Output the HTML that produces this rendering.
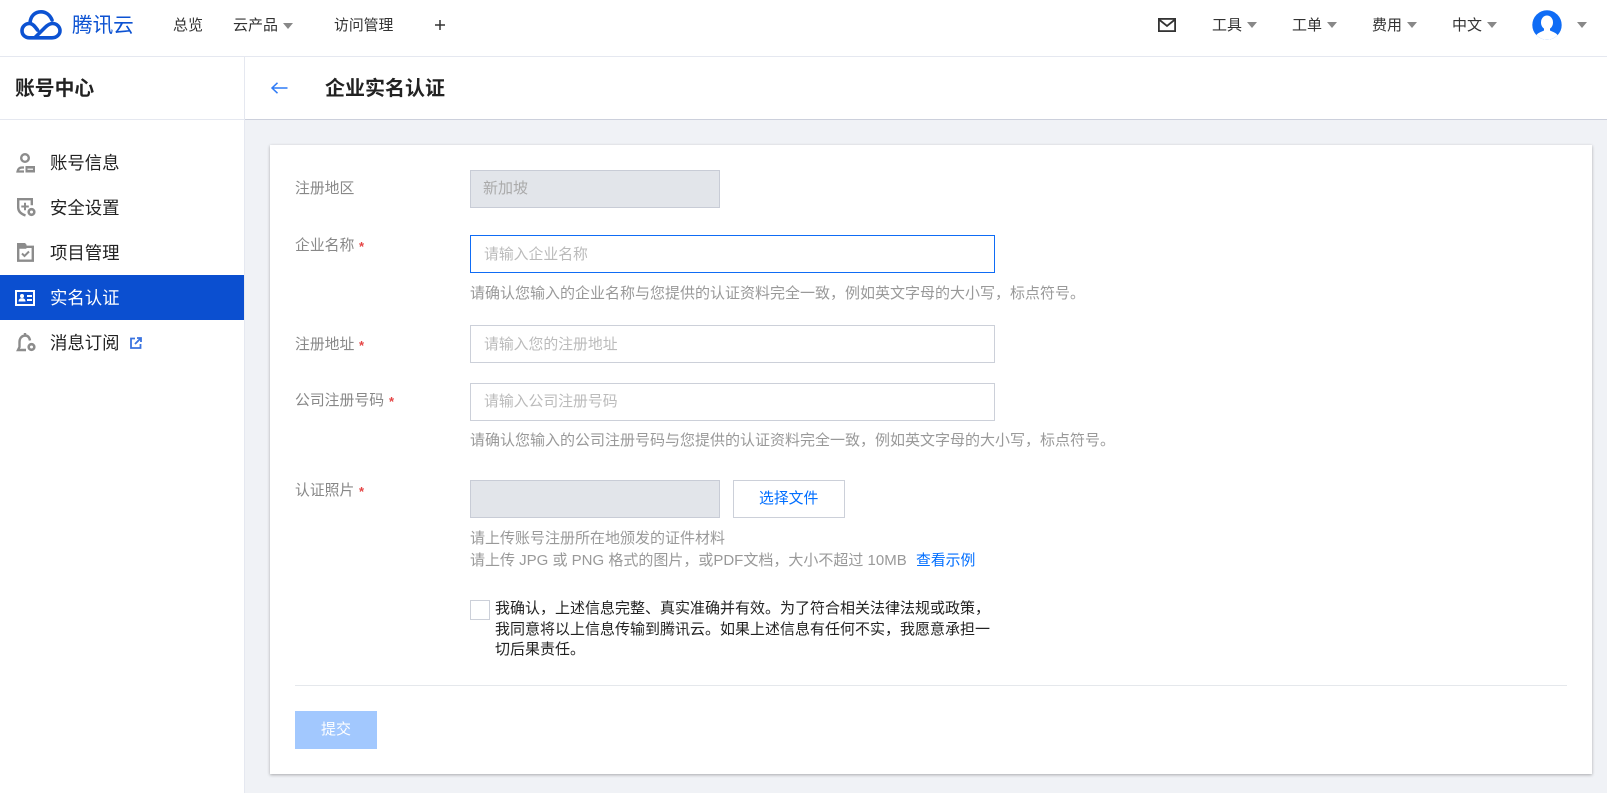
<!DOCTYPE html>
<html lang="zh-CN">
<head>
<meta charset="utf-8">
<title>企业实名认证</title>
<style>
html,body{margin:0;padding:0;}
body{position:relative;width:1607px;height:793px;overflow:hidden;background:#f0f2f6;font-family:"Liberation Sans","Noto Sans CJK SC",sans-serif;font-size:15px;color:#222;}
.b{position:absolute;box-sizing:border-box;}
.t{position:absolute;white-space:nowrap;line-height:20px;height:20px;}
.nav{color:#333;}
.label{color:#888;left:295px;font-size:14.85px;}
.help{color:#999;left:470px;}
.ph{color:#bbb;left:484px;font-size:14.85px;}
.star{position:absolute;color:#e54545;font-size:13px;line-height:12px;font-weight:700;}
.input{left:470px;width:525px;height:38px;background:#fff;border:1px solid #ccd0d9;}
.side{left:50px;font-size:17.4px;color:#222;}
.caret{position:absolute;width:0;height:0;border-left:5px solid transparent;border-right:5px solid transparent;border-top:6px solid #888;}
svg{position:absolute;overflow:visible;}
</style>
</head>
<body>
<!-- top bar -->
<div class="b" style="left:0;top:0;width:1607px;height:57px;background:#fff;border-bottom:1px solid #e5e8f0;"></div>
<svg style="left:20px;top:10px" width="42" height="30" viewBox="0 0 42 30" fill="none" stroke="#0c52d2" stroke-width="3.6" stroke-linecap="round" stroke-linejoin="round">
<path d="M10 13C10.500 6 15 1.800 21 1.800C26 1.800 30 5 32 10"/>
<path d="M17.500 20C14.500 16 12.500 13.500 9.500 13.500C5.200 13.500 2 16.800 2 20.700C2 24.800 5.300 27.800 9.500 27.800H32C36.500 27.800 40 24.500 40 20.700C40 16.500 36.500 13.500 32.500 13.500C29.500 13.500 27.500 15 25 17.500L15 27.500"/>
</svg>
<div class="t" style="left:72px;top:14px;font-size:20.600px;line-height:24px;height:24px;color:#0c52d2;">腾讯云</div>
<div class="t nav" style="left:173px;top:16px;">总览</div>
<div class="t nav" style="left:233px;top:16px;">云产品</div>
<div class="caret" style="left:283px;top:23px;"></div>
<div class="t nav" style="left:334px;top:16px;font-size:14.85px;">访问管理</div>
<svg style="left:435px;top:20px" width="10" height="10" viewBox="0 0 10 10" stroke="#333" stroke-width="1.500"><path d="M0 5H10M5 0V10"/></svg>

<svg style="left:1158px;top:18px" width="18" height="14" viewBox="0 0 18 14" fill="none" stroke="#333" stroke-width="1.800"><rect x=".9" y=".9" width="16.200" height="12.200"/><path d="M1 1.500L9 8l8-6.500"/></svg>
<div class="t nav" style="left:1212px;top:16px;">工具</div>
<div class="caret" style="left:1247px;top:22px;"></div>
<div class="t nav" style="left:1292px;top:16px;">工单</div>
<div class="caret" style="left:1327px;top:22px;"></div>
<div class="t nav" style="left:1372px;top:16px;">费用</div>
<div class="caret" style="left:1407px;top:22px;"></div>
<div class="t nav" style="left:1452px;top:16px;">中文</div>
<div class="caret" style="left:1487px;top:22px;"></div>
<svg style="left:1532px;top:10px" width="30" height="30" viewBox="0 0 30 30">
<defs><clipPath id="c"><circle cx="15" cy="15" r="14.700"/></clipPath></defs>
<circle cx="15" cy="15" r="14.700" fill="#0f6cf5"/>
<g clip-path="url(#c)" fill="#fff"><ellipse cx="15" cy="12.500" rx="6" ry="7"/><path d="M12 18v2.500c-2.500 1.500-7 2.200-8 5.500v5h22v-5c-1-3.300-5.500-4-8-5.500V18z"/></g>
</svg>
<div class="caret" style="left:1577px;top:22px;"></div>

<!-- sidebar -->
<div class="b" style="left:0;top:57px;width:245px;height:736px;background:#fff;border-right:1px solid #e5e8f0;"></div>
<div class="b" style="left:0;top:119px;width:244px;height:1px;background:#e5e8f0;"></div>
<div class="t" style="left:15px;top:79px;height:20px;font-size:19.800px;line-height:20px;font-weight:700;color:#222;">账号中心</div>

<svg style="left:16px;top:152px" width="20" height="21" viewBox="0 0 20 21" fill="none" stroke="#8c8c8c" stroke-width="2.400"><circle cx="9" cy="6" r="3.800"/><path d="M8 15.500H6C3.500 15.500 2 16.800 1.500 19.500H8" stroke-width="2.200"/><rect x="9.500" y="14" width="9.500" height="6.500" fill="#8c8c8c" stroke="none"/><path d="M11.500 17.200h5.500" stroke="#fff" stroke-width="1.200"/></svg>
<div class="t side" style="top:153px;">账号信息</div>

<svg style="left:17px;top:198px" width="19" height="19" viewBox="0 0 19 19" fill="none" stroke="#8c8c8c" stroke-width="2.400"><path d="M8.500 17.500C3.500 15.800 1.200 13 1.200 9.500V1.200h13.600v6"/><path d="M8 4.800v7.500M4.300 8.500h7.500" stroke-width="2"/><circle cx="14.500" cy="14" r="2.800" stroke-width="2.600"/></svg>
<div class="t side" style="top:198px;">安全设置</div>

<svg style="left:17px;top:243px" width="17" height="19" viewBox="0 0 17 19" fill="none" stroke="#8c8c8c" stroke-width="2.400"><path d="M1.200 1.200h6.300l1.500 2.600h6.800v13.900H1.200z"/><path d="M1.200 2.500h7v2h-7z" fill="#8c8c8c"/><path d="M5 10.500l2.500 2.500 4.500-4.500" stroke-width="2"/></svg>
<div class="t side" style="top:243px;">项目管理</div>

<div class="b" style="left:0;top:275px;width:244px;height:45px;background:#0b4fd0;"></div>
<svg style="left:15px;top:290px" width="20" height="16" viewBox="0 0 20 16"><rect x="1" y="1" width="18" height="14" fill="none" stroke="#fff" stroke-width="2"/><circle cx="7" cy="6" r="2" fill="#fff"/><path d="M3.500 11.500c0-2.500 1.500-3.300 3.500-3.300s3.500.8 3.500 3.300z" fill="#fff"/><path d="M12 6h5M12 10h5" stroke="#fff" stroke-width="2"/></svg>
<div class="t side" style="top:288px;color:#fff;">实名认证</div>

<svg style="left:17px;top:333px" width="19" height="19" viewBox="0 0 19 19" fill="none" stroke="#8c8c8c" stroke-width="2.400"><path d="M8 0v2.500C4 3 2.500 6 2.500 9v5L1 17h8"/><path d="M8 2.500c3 0 4.500 2 5 5"/><circle cx="14.500" cy="14" r="2.800" stroke-width="2.600"/></svg>
<div class="t side" style="top:333px;">消息订阅</div>
<svg style="left:130px;top:337px" width="12" height="12" viewBox="0 0 12 12" fill="none" stroke="#3a73e0" stroke-width="1.800"><path d="M5 1.500H1v9.500h9.500V7"/><path d="M5 7l5.500-5.500M7 1h4v4"/></svg>

<!-- subheader -->
<div class="b" style="left:245px;top:57px;width:1362px;height:63px;background:#fff;border-bottom:1px solid #ccd0dc;"></div>
<svg style="left:271px;top:82px" width="17" height="12" viewBox="0 0 17 12" fill="none" stroke="#2f7bf6" stroke-width="1.500"><path d="M16.500 6H1M6.500 .8L1 6l5.500 5.200"/></svg>
<div class="t" style="left:325px;top:79px;font-size:20px;font-weight:700;color:#222;">企业实名认证</div>

<!-- card -->
<div class="b" style="left:270px;top:145px;width:1322px;height:629px;background:#fff;box-shadow:0 1px 3px rgba(0,0,0,.3);"></div>

<div class="t label" style="top:179px;">注册地区</div>
<div class="b" style="left:470px;top:170px;width:250px;height:38px;background:#e2e5ea;border:1px solid #c8ccd6;"></div>
<div class="t" style="left:483px;top:179px;color:#aaa;">新加坡</div>

<div class="t label" style="top:236px;">企业名称</div>
<div class="star" style="left:359px;top:241px;">*</div>
<div class="b input" style="top:235px;border-color:#0f6cf5;"></div>
<div class="t ph" style="top:245px;">请输入企业名称</div>
<div class="t help" style="top:284px;">请确认您输入的企业名称与您提供的认证资料完全一致，例如英文字母的大小写，标点符号。</div>

<div class="t label" style="top:335px;">注册地址</div>
<div class="star" style="left:359px;top:340px;">*</div>
<div class="b input" style="top:325px;"></div>
<div class="t ph" style="top:335px;">请输入您的注册地址</div>

<div class="t label" style="top:391px;">公司注册号码</div>
<div class="star" style="left:389px;top:396px;">*</div>
<div class="b input" style="top:383px;"></div>
<div class="t ph" style="top:392px;">请输入公司注册号码</div>
<div class="t help" style="top:431px;">请确认您输入的公司注册号码与您提供的认证资料完全一致，例如英文字母的大小写，标点符号。</div>

<div class="t label" style="top:481px;">认证照片</div>
<div class="star" style="left:359px;top:486px;">*</div>
<div class="b" style="left:470px;top:480px;width:250px;height:38px;background:#e2e5ea;border:1px solid #c8ccd6;"></div>
<div class="b" style="left:733px;top:480px;width:112px;height:38px;background:#fff;border:1px solid #ccd0d9;"></div>
<div class="t" style="left:759px;top:489px;color:#006eff;font-size:14.85px;">选择文件</div>
<div class="t help" style="top:529px;">请上传账号注册所在地颁发的证件材料</div>
<div class="t help" style="top:551px;">请上传 JPG 或 PNG 格式的图片，或PDF文档，大小不超过 10MB</div>
<div class="t" style="left:916px;top:551px;color:#006eff;font-size:14.85px;">查看示例</div>

<div class="b" style="left:470px;top:600px;width:20px;height:20px;background:#fff;border:1px solid #ccd0d9;"></div>
<div class="t" style="left:495px;top:599px;color:#222;">我确认，上述信息完整、真实准确并有效。为了符合相关法律法规或政策，</div>
<div class="t" style="left:495px;top:620px;color:#222;">我同意将以上信息传输到腾讯云。如果上述信息有任何不实，我愿意承担一</div>
<div class="t" style="left:495px;top:640px;color:#222;">切后果责任。</div>

<div class="b" style="left:295px;top:685px;width:1272px;height:1px;background:#e5e8ec;"></div>
<div class="b" style="left:295px;top:711px;width:82px;height:38px;background:#a2c8fe;"></div>
<div class="t" style="left:321px;top:720px;color:#fff;">提交</div>
</body>
</html>
